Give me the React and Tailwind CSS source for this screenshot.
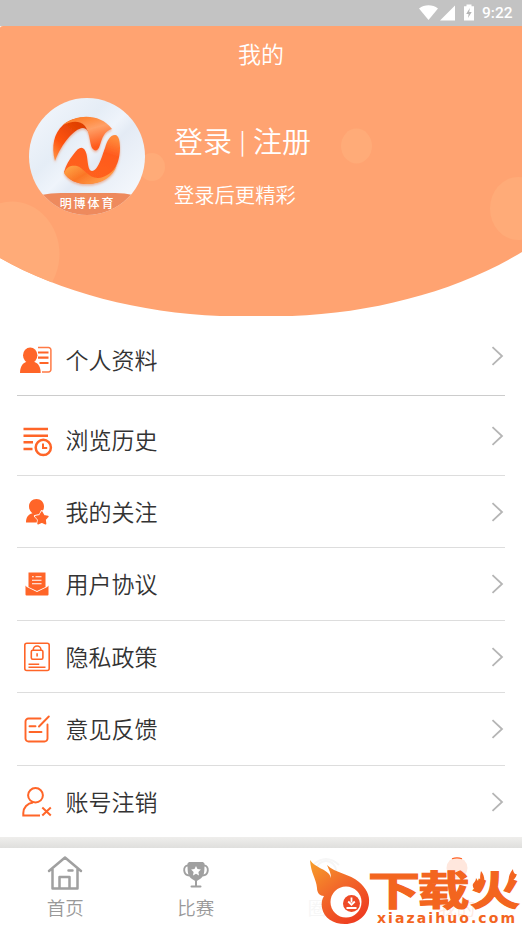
import React from 'react';

const ORANGE = '#ff6528';

const ProfileIcon = () => (
  <svg className="-ml-[2px]" width="32" height="28" viewBox="0 0 32 28" fill="none">
    <path d="M18 1.500h10.500a2.400 2.400 0 0 1 2.400 2.400v19.700a2.400 2.400 0 0 1-2.400 2.400H22" stroke="#ff7a45" strokeWidth="1.500" />
    <path d="M18 6.500h10.500M18 11.700h10.500M19.500 17h9" stroke={ORANGE} strokeWidth="2.200" />
    <ellipse cx="10.200" cy="9.300" rx="7.200" ry="7.900" fill={ORANGE} />
    <path d="M0 27c0-6 2.400-9.700 6.500-11.200h7.500c4.400 1.500 6.700 5.200 6.700 11.200z" fill={ORANGE} />
  </svg>
);

const HistoryIcon = () => (
  <svg className="mt-[4px]" width="32" height="30" viewBox="0 0 32 30" fill="none" stroke={ORANGE}>
    <path d="M2.500 2h24.500M2.500 8.700h24.500M2.500 15.300h9.500M2.500 22h9" strokeWidth="2.400" />
    <circle cx="22.300" cy="20.200" r="10" fill="#fff" stroke="none" />
    <circle cx="22.300" cy="20.400" r="7.600" strokeWidth="2.500" />
    <path d="M22 16.500v4.500h4.200" strokeWidth="2" />
  </svg>
);

const FollowIcon = () => (
  <svg width="24" height="26" viewBox="0 0 24 26" fill={ORANGE}>
    <path d="M11.500 0c4.300 0 7.500 3.200 7.500 7.400 0 3-1.500 5.500-3.700 7l-1 9.100H1c0-5 1.800-8 6.500-9.300-2-1.300-3.500-3.800-3.500-6.800C4 3.200 7.200 0 11.500 0z" />
    <path
      d="m16.800 12 2.200 4.100 4.600.9-3.100 3.500.6 4.700-4.300-1.900-4.300 1.900.6-4.700-3.200-3.500 4.700-.9z"
      strokeLinejoin="round"
      stroke="#fff"
      strokeWidth="2"
    />
    <path
      d="m16.800 13 2 3.700 4.100.8-2.800 3.100.5 4.200-3.800-1.700-3.800 1.700.5-4.200-2.800-3.100 4.100-.8z"
      strokeLinejoin="round"
      stroke={ORANGE}
      strokeWidth="1.500"
    />
  </svg>
);

const AgreementIcon = () => (
  <svg width="24" height="24" viewBox="0 0 24 24">
    <path d="M3.500.5h17v14.500L12 19 3.500 15z" fill={ORANGE} />
    <path d="M7 4.700h1.800M10.500 4.700h6M7 8.200h9.500M7 11.700h9.500" stroke="#fff" strokeWidth="1.100" />
    <path d="M.5 13.500 1.800 15 12 19.900 22.200 15l1.300-1.500v9a1 1 0 0 1-1 1h-21a1 1 0 0 1-1-1z" fill={ORANGE} />
  </svg>
);

const PrivacyIcon = () => (
  <svg width="26" height="30" viewBox="0 0 26 30" fill="none" stroke={ORANGE} strokeWidth="1.600">
    <rect x=".8" y="1.200" width="24.400" height="27.300" rx="2" />
    <rect x="7.300" y="8.300" width="11.600" height="9" rx="1.500" />
    <path d="M9.300 8.300V7.500a3.800 3.500 0 0 1 7.600 0v.8M13.100 11.300v3.300M4.500 22.300h10.700M4.500 25.200h17" />
  </svg>
);

const FeedbackIcon = () => (
  <svg width="26" height="28" viewBox="0 0 26 28" fill="none" stroke={ORANGE} strokeWidth="1.900" strokeLinecap="round">
    <path d="M16.500 3.500H4.500a3 3 0 0 0-3 3v17a3 3 0 0 0 3 3h16a3 3 0 0 0 3-3V9.500M15 11.500 24.800 1.500M5.500 11.300h6M5.500 17h12" />
  </svg>
);

const CancelIcon = () => (
  <svg width="30" height="30" viewBox="0 0 30 30" fill="none" stroke={ORANGE} strokeWidth="2">
    <ellipse cx="13.500" cy="8.300" rx="7.400" ry="7.200" />
    <path d="M18 28.600H1.300v-2.500c0-5.500 4-10 9.800-10.500M20.300 20.500l8.500 8M28.800 20.500l-8.500 8" />
  </svg>
);

const items = [
  { label: '个人资料', Icon: ProfileIcon, row: 'h-[80px] border-b border-[#cccccc]', shifted: true },
  { label: '浏览历史', Icon: HistoryIcon, row: 'h-[80px] border-b border-[#dddddd]', shifted: true },
  { label: '我的关注', Icon: FollowIcon, row: 'h-[72px] border-b border-[#dddddd]' },
  { label: '用户协议', Icon: AgreementIcon, row: 'h-[73px] border-b border-[#dddddd]' },
  { label: '隐私政策', Icon: PrivacyIcon, row: 'h-[72px] border-b border-[#dddddd]' },
  { label: '意见反馈', Icon: FeedbackIcon, row: 'h-[73px] border-b border-[#dddddd]' },
  { label: '账号注销', Icon: CancelIcon, row: 'h-[71px]' },
];

const StatusBar = () => (
  <div className="h-[26px] bg-[#c3c3c3] flex items-center justify-end pr-[9px] text-white">
    <svg width="57" height="18" viewBox="0 0 57 18" fill="#fff">
      <path d="M0 4.500C5.500.200 13.500.200 19 4.500L9.500 16z" />
      <path d="M36 1.500V16.500H21z" />
      <path d="M45 2.200h2.500V.5h5v1.700H55v14.300H45z" />
      <path d="m50.800 4-3.600 6h2.400l-.6 4 3.700-6h-2.500z" fill="#b5b5b5" />
    </svg>
    <span className="ml-[6px] w-[31px] whitespace-nowrap font-[Roboto] font-medium text-[15.500px] leading-none pt-[2px]">9:22</span>
  </div>
);

const Avatar = () => (
  <svg width="116" height="117" viewBox="0 0 116 117">
    <defs>
      <linearGradient id="plate" x1="0" y1="0" x2="1" y2="1">
        <stop offset="0" stopColor="#f5f8fd" />
        <stop offset=".35" stopColor="#e5edf6" />
        <stop offset=".48" stopColor="#eff4fb" />
        <stop offset=".56" stopColor="#e4ebf5" />
        <stop offset="1" stopColor="#fbfdff" />
      </linearGradient>
      <linearGradient id="leaf" x1="0" y1="1" x2=".8" y2="0">
        <stop offset="0" stopColor="#ff9a4a" />
        <stop offset=".35" stopColor="#ff5410" />
        <stop offset=".7" stopColor="#e84606" />
        <stop offset="1" stopColor="#d83a02" />
      </linearGradient>
      <linearGradient id="fold" x1="0" y1="0" x2=".4" y2="1">
        <stop offset="0" stopColor="#ff7414" />
        <stop offset=".5" stopColor="#ffa067" />
        <stop offset="1" stopColor="#ff5a1c" />
      </linearGradient>
      <linearGradient id="lower" x1=".7" y1="0" x2=".3" y2="1">
        <stop offset="0" stopColor="#ff8a3a" />
        <stop offset=".3" stopColor="#ff5a1e" />
        <stop offset="1" stopColor="#ff6420" />
      </linearGradient>
      <linearGradient id="base" x1="0" y1="0" x2="1" y2=".6">
        <stop offset="0" stopColor="#ffad4c" />
        <stop offset=".5" stopColor="#fb7626" />
        <stop offset="1" stopColor="#ffa550" />
      </linearGradient>
      <clipPath id="round">
        <ellipse cx="58" cy="58.500" rx="58" ry="58.500" />
      </clipPath>
      <filter id="glow" x="-20%" y="-20%" width="140%" height="140%">
        <feDropShadow dx="0" dy="1.500" stdDeviation="1.300" floodColor="#e8916a" floodOpacity=".65" />
      </filter>
    </defs>
    <g clipPath="url(#round)">
      <rect width="116" height="117" fill="url(#plate)" />
      <g filter="url(#glow)">
        <path d="M26 63C22 48 25 35 34 27 41 21 50 19 58 20l4 22c-1-7-3-11-8-12C45 31 33 45 26 63z" fill="url(#leaf)" />
        <path d="M34 27C47 16 71 15 83 31c-8 2-10 10-12 16-2 7-6 7-8.500 2-2-6-2-15-6.500-21-5-6-14-5-22-1z" fill="url(#fold)" />
        <path d="M35 74c2-7 5-12 9-17 6-9 11-10 13.500-1C59 62 58.500 73 63 73c6 0 10-15 13-23 2-7 5-13 10-13 4 0 5 7 5 13 0 22-14 36-33 36-10 0-19-4-23-12z" fill="url(#lower)" />
        <path d="M35 75c3-7 8-8 13-7 7 2 12 13 22 12 7-1 14-6 18-13-4 12-15 19-30 19-10 0-19-4-23-11z" fill="url(#base)" />
      </g>
      <path d="M12 97q10-2 20-2h54q10 0 18 2v20H12z" fill="#ee8a5d" />
      <text
        x="58.500"
        y="109.500"
        textAnchor="middle"
        fill="#fff"
        fontSize="12"
        fontWeight="500"
        letterSpacing="1.900"
        fontFamily="'Noto Sans CJK SC', sans-serif"
      >
        明博体育
      </text>
    </g>
  </svg>
);

const Header = () => (
  <header className="relative h-[290px] text-white">
    {/* curved backdrop with bubbles */}
    <svg className="absolute inset-0" width="522" height="290" viewBox="0 0 522 290">
      <defs>
        <clipPath id="curve">
          <path d="M0 2Q0 0 3 0H522V226C460 264 375 287 292 290H220C140 287 60 266 0 232z" />
        </clipPath>
      </defs>
      <g clipPath="url(#curve)">
        <rect width="522" height="290" fill="#ffa371" />
        <g fill="#ffab78">
          <ellipse cx="12" cy="228" rx="47.500" ry="52.500" />
          <ellipse cx="152" cy="141" rx="13" ry="14" />
          <ellipse cx="356.500" cy="120" rx="15.500" ry="17.500" />
          <ellipse cx="518" cy="182.500" rx="28" ry="31.500" />
        </g>
      </g>
    </svg>
    <div className="relative">
      <h1 className="h-[72px] pt-[10px] text-center text-[23px] leading-[34px] font-[350]">我的</h1>
      <div className="flex pl-[29px]">
        <Avatar />
        <div className="ml-[29px] pt-[21px]">
          <p className="flex items-center text-[29px] leading-[42px]">
            <span>登录</span>
            <span className="w-[21px] text-center text-[23px] leading-[42px]">|</span>
            <span>注册</span>
          </p>
          <p className="mt-[18px] text-[20.300px] leading-[30px]">登录后更精彩</p>
        </div>
      </div>
    </div>
  </header>
);

const Chevron = () => (
  <svg width="13" height="20" viewBox="0 0 13 20" fill="none">
    <path d="M1.500 1.200 11 10l-9.500 8.800" stroke="#b5b5b5" strokeWidth="1.800" />
  </svg>
);

const MenuItem = ({ label, Icon, row, shifted }) => (
  <li className={`flex items-center pr-[1px] ${row}`}>
    <div className={`flex flex-1 items-center ${shifted ? 'pt-[9px]' : ''}`}>
      <span className="w-[40px] flex justify-center">
        <Icon />
      </span>
      <span className="ml-[8.500px] -mt-[2px] text-[23px] leading-[34px] text-[#333]">{label}</span>
    </div>
    <Chevron />
  </li>
);

const HomeIcon = () => (
  <svg width="36" height="36" viewBox="0 0 36 36" fill="none" stroke="#a0a0a0" strokeWidth="2.500" strokeLinejoin="round" strokeLinecap="round">
    <path d="M2 16 18 2.500 34 16M5.500 14v19.500h25V14M12.500 33V22h10v11M21.500 15.500h4" />
  </svg>
);

const TrophyIcon = () => (
  <svg width="28" height="36" viewBox="0 0 28 36" fill="none">
    <path d="M6.500 10.500H5.500C.8 11 .8 20.500 7.500 20.500M21.500 10.500h1C27.200 11 27.200 20.500 20.500 20.500" stroke="#a0a0a0" strokeWidth="1.900" />
    <path d="M5.500 8.500 7 7h14l1.500 1.500C22.500 18 22 21.500 18 24l-4 2.500L10 24C6 21.500 5.500 18 5.500 8.500z" fill="#a0a0a0" />
    <path d="M14 25v6.500M9.500 31.500h9" stroke="#a0a0a0" strokeWidth="2" strokeLinecap="round" />
    <path d="m14 11 1.500 3.100 3.400.5-2.500 2.400.6 3.400-3-1.600-3 1.600.6-3.400-2.500-2.400 3.400-.5z" fill="#fff" />
  </svg>
);

const SiteLogo = () => (
  <svg width="214" height="72" viewBox="0 0 214 72">
    <defs>
      <linearGradient id="flame" x1="0" y1="0" x2=".7" y2="1">
        <stop offset="0" stopColor="#f7a02a" />
        <stop offset=".5" stopColor="#f2692a" />
        <stop offset="1" stopColor="#ee3d20" />
      </linearGradient>
    </defs>
    <path
      d="M2 0c6 9 19 9 21 18 0-5-2-8-4-13 8 8 23 9 32 17 7 6 11 13 10 21-1 12-11 21-24 21-12 0-21-6-23-16-1-5 0-9 2-12-4 0-7-3-7-8C8 18 3 14 2 0z"
      fill="url(#flame)"
    />
    <circle cx="38" cy="42" r="15.500" fill="#fff" />
    <circle cx="43.500" cy="43.500" r="8.500" fill="#ee4a26" />
    <path d="M43.500 37.500v5M40.200 41.500l3.300 3.300 3.300-3.300M38.500 48h10" stroke="#fff" strokeWidth="1.800" fill="none" />
    <g fill="#f3651f" stroke="#f3651f" strokeWidth="1.200" fontSize="40" fontFamily="'Noto Sans CJK SC', sans-serif" fontWeight="700">
      <text x="60" y="44.500" textLength="52" lengthAdjust="spacingAndGlyphs">下</text>
      <text x="109.500" y="44.500" textLength="52" lengthAdjust="spacingAndGlyphs">载</text>
      <text x="162" y="44.500" textLength="50" lengthAdjust="spacingAndGlyphs">火</text>
    </g>
    {/* flame licks on both sides of the last character */}
    <g fill="#f3651f">
      <path d="M168 18c3 4 5 8 2 13-4-1-6-4-5-7 1-2 3-3 3-6zM173 11c4 5 5 12 0 18 0-6-2-10 0-18zM205 9c-4 5-5 9-4 14 4-2 7-5 8-9-2 1-4-2-4-5z" />
    </g>
    <text x="69" y="62.500" fontSize="14" fontWeight="700" fill="#f3651f" fontFamily="'DejaVu Sans', sans-serif" textLength="138" lengthAdjust="spacing">
      xiazaihuo.com
    </text>
  </svg>
);

const tabs = [
  { label: '首页', Icon: HomeIcon },
  { label: '比赛', Icon: TrophyIcon },
];

const TabBar = () => (
  <nav className="relative h-[80px] grid grid-cols-4 bg-white font-[350]">
    {tabs.map(({ label, Icon }) => (
      <div key={label} className="flex flex-col items-center pt-[7px] text-[#999]">
        <Icon />
        <span className="mt-[2px] text-[18.500px] leading-[28px]">{label}</span>
      </div>
    ))}
    <div className="flex flex-col items-center pt-[7px] text-[#f6f6f6]">
      <svg width="36" height="36" viewBox="0 0 36 36" fill="none" stroke="#f6f6f6" strokeWidth="2">
        <circle cx="18" cy="16" r="10" />
        <path d="M5 10Q18-2 31 10" />
      </svg>
      <span className="mt-[2px] text-[18.500px] leading-[28px]">圈子</span>
    </div>
    <div className="flex flex-col items-center pt-[7px] text-[#ffe9df]">
      <svg width="36" height="36" viewBox="0 0 36 36">
        <circle cx="18" cy="13" r="10.500" fill="#ffe7dd" />
        <path d="M13 3.800q5-2 10 0" stroke="#ff6528" strokeWidth="1.200" fill="none" />
      </svg>
      <span className="mt-[2px] text-[18.500px] leading-[28px]">我的</span>
    </div>
    <div className="absolute left-[308px] top-[12px]">
      <SiteLogo />
    </div>
  </nav>
);

const App = () => {
  return (
    <div className="w-[522px] h-[928px] overflow-hidden bg-white font-['Noto_Sans_CJK_SC',sans-serif] font-[350]">
      <StatusBar />
      <Header />
      <ul className="h-[521px] px-[17px]">
        {items.map((item) => (
          <MenuItem key={item.label} {...item} />
        ))}
      </ul>
      <div className="h-[11px] bg-gradient-to-b from-[#efeeec] to-[#dfdfdd]" />
      <TabBar />
    </div>
  );
};

export default App;
